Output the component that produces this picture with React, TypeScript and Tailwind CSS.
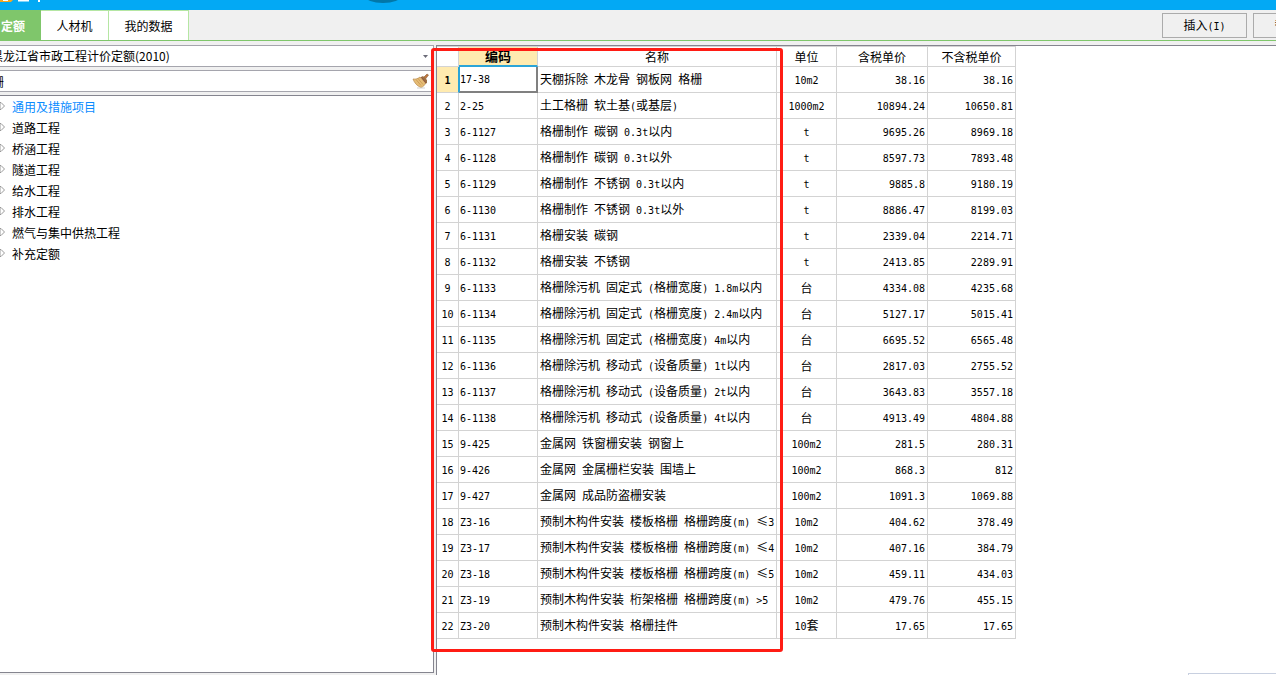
import React from "react";

type Row = [string, string, string, string, string];

const rows: Row[] = [
  ["17-38", "天棚拆除 木龙骨 钢板网 格栅", "10m2", "38.16", "38.16"],
  ["2-25", "土工格栅 软土基(或基层)", "1000m2", "10894.24", "10650.81"],
  ["6-1127", "格栅制作 碳钢 0.3t以内", "t", "9695.26", "8969.18"],
  ["6-1128", "格栅制作 碳钢 0.3t以外", "t", "8597.73", "7893.48"],
  ["6-1129", "格栅制作 不锈钢 0.3t以内", "t", "9885.8", "9180.19"],
  ["6-1130", "格栅制作 不锈钢 0.3t以外", "t", "8886.47", "8199.03"],
  ["6-1131", "格栅安装 碳钢", "t", "2339.04", "2214.71"],
  ["6-1132", "格栅安装 不锈钢", "t", "2413.85", "2289.91"],
  ["6-1133", "格栅除污机 固定式 (格栅宽度) 1.8m以内", "台", "4334.08", "4235.68"],
  ["6-1134", "格栅除污机 固定式 (格栅宽度) 2.4m以内", "台", "5127.17", "5015.41"],
  ["6-1135", "格栅除污机 固定式 (格栅宽度) 4m以内", "台", "6695.52", "6565.48"],
  ["6-1136", "格栅除污机 移动式 (设备质量) 1t以内", "台", "2817.03", "2755.52"],
  ["6-1137", "格栅除污机 移动式 (设备质量) 2t以内", "台", "3643.83", "3557.18"],
  ["6-1138", "格栅除污机 移动式 (设备质量) 4t以内", "台", "4913.49", "4804.88"],
  ["9-425", "金属网 铁窗栅安装 钢窗上", "100m2", "281.5", "280.31"],
  ["9-426", "金属网 金属栅栏安装 围墙上", "100m2", "868.3", "812"],
  ["9-427", "金属网 成品防盗栅安装", "100m2", "1091.3", "1069.88"],
  ["Z3-16", "预制木构件安装 楼板格栅 格栅跨度(m) ≤3", "10m2", "404.62", "378.49"],
  ["Z3-17", "预制木构件安装 楼板格栅 格栅跨度(m) ≤4", "10m2", "407.16", "384.79"],
  ["Z3-18", "预制木构件安装 楼板格栅 格栅跨度(m) ≤5", "10m2", "459.11", "434.03"],
  ["Z3-19", "预制木构件安装 桁架格栅 格栅跨度(m) >5", "10m2", "479.76", "455.15"],
  ["Z3-20", "预制木构件安装 格栅挂件", "10套", "17.65", "17.65"],
];

const chapters = [
  "通用及措施项目",
  "道路工程",
  "桥涵工程",
  "隧道工程",
  "给水工程",
  "排水工程",
  "燃气与集中供热工程",
  "补充定额",
];

/* Sets Latin runs in a half-width monospace beside the full-width characters. */
function Mixed({ text }: { text: string }) {
  return (
    <>
      {text.split(/([\x20-\x7e]+)/).map((part, i) =>
        i % 2 ? (
          <span key={i} className="font-['DejaVu_Sans_Mono',monospace] text-[10px]">
            {part}
          </span>
        ) : (
          part
        ),
      )}
    </>
  );
}

function TitleBar() {
  return (
    <header className="h-[10px] shrink-0 overflow-hidden bg-[#03a9f4]">
      <svg className="block" width="460" height="10" viewBox="0 0 460 10" aria-hidden="true">
        <path d="M0 0h13l-2 2H0z" fill="#f5a623" />
        <path d="M3 0h5v1H3z" fill="#fff" />
        <path d="M18 0h11v1.5H18zM38 0h2v2h-2z" fill="#fff" />
        <ellipse cx="383" cy="-4" rx="18" ry="7" fill="#0277a8" />
      </svg>
    </header>
  );
}

function Toolbar() {
  const button =
    "h-[25px] w-[85px] shrink-0 border border-[#ababab] bg-[#f0f0f0] pt-px whitespace-nowrap text-center";
  return (
    <div className="flex h-[31px] shrink-0 justify-between border-b border-[#7fc66b]">
      <nav className="flex" role="tablist">
        <button role="tab" aria-selected="true" className="w-[41px] bg-[#7fc66b] pt-px pr-4 text-right font-bold whitespace-nowrap text-white">
          定额
        </button>
        <button role="tab" aria-selected="false" className="w-[68px] border-t border-r border-[#b5e6a3] bg-white pt-px">
          人材机
        </button>
        <button role="tab" aria-selected="false" className="w-20 border-t border-r border-[#b5e6a3] bg-white pt-px">
          我的数据
        </button>
      </nav>
      <div className="-mr-[62px] flex items-center gap-[6px]">
        <button className={button}>
          <Mixed text="插入(I)" />
        </button>
        <button className={button}>
          <Mixed text="替换(R)" />
        </button>
      </div>
    </div>
  );
}

function Broom() {
  return (
    <svg width="18" height="16" viewBox="0 0 18 16" aria-hidden="true">
      <path d="M11.5 4.5L15 1l1.5 1-3 4z" fill="#c07840" stroke="#8a5a34" strokeWidth=".6" />
      <path d="M9 4l2-1 4 4v3l-2 1z" fill="#9a7044" />
      <path d="M1 6c3 .5 5-.5 7-2l5.5 6c-.5 2-2.500 4-4.500 4.500C5 13 2.500 10 1 6z" fill="#e6bd76" stroke="#b88a4c" strokeWidth=".7" />
      <path d="M4 6.500l5 6M6 5.500l5 6" stroke="#c4924e" strokeWidth=".7" fill="none" />
      <path d="M9 4l5 6" stroke="#8c4a3a" strokeWidth=".8" />
      <path d="M5 15h8" stroke="#c8c8c8" strokeWidth=".8" />
    </svg>
  );
}

function Sidebar() {
  return (
    <aside className="-ml-3 flex w-[446px] shrink-0 flex-col">
      <div className="relative flex h-[22px] shrink-0 items-center border border-[#a5a5ad] bg-white">
        <select aria-label="定额库" className="h-full w-full appearance-none bg-white pl-[2px] outline-none">
          <option>黑龙江省市政工程计价定额(2010)</option>
        </select>
        <svg className="pointer-events-none absolute right-[5px]" width="5" height="3" viewBox="0 0 5 3" aria-hidden="true">
          <path d="M0 0h5L2.5 3z" fill="#6b6b78" />
        </svg>
      </div>
      <div className="mt-[3px] flex h-[22px] shrink-0 items-center border border-[#a5a5ad] bg-white pr-[3px]">
        <input aria-label="搜索定额" defaultValue="栅" className="h-full min-w-0 flex-1 pl-[3px] outline-none" />
        <button aria-label="清除">
          <Broom />
        </button>
      </div>
      <ul role="tree" className="mt-[3px] grow border border-[#85858f] bg-white">
        {chapters.map((name, i) => (
          <li
            key={name}
            role="treeitem"
            aria-selected={i === 0}
            className={
              i === 0
                ? "flex h-[21px] items-center gap-[7px] pl-[10px] text-[#0a8cff]"
                : "flex h-[21px] items-center gap-[7px] pl-[10px]"
            }
          >
            <svg width="6" height="8" viewBox="0 0 6 8" className="mb-px" aria-hidden="true">
              <path d="M1 .5h1L5.500 4 2 7.500H1z" fill="#fff" stroke="#999" />
            </svg>
            {name}
          </li>
        ))}
      </ul>
    </aside>
  );
}

function QuotaTable() {
  const cell = "border-r border-b border-[#d3d3d3] p-0 whitespace-nowrap overflow-hidden";
  return (
    <table className="w-[579px] table-fixed border-separate border-spacing-0">
      <colgroup>
        <col className="w-[22px]" />
        <col className="w-[79px]" />
        <col className="w-[239px]" />
        <col className="w-[60px]" />
        <col className="w-[91px]" />
        <col className="w-[88px]" />
      </colgroup>
      <thead>
        <tr className="h-[21px]">
          <th className={`${cell} border-t`} aria-label="序号" />
          <th className="border-t border-r border-b-2 border-t-[#d3d3d3] border-r-[#d3d3d3] border-b-[#2ba5d8] bg-[#ffebb0] p-0 text-[13px] font-bold">
            编码
          </th>
          {["名称", "单位", "含税单价", "不含税单价"].map((h) => (
            <th key={h} className={`${cell} border-t font-normal`}>
              {h}
            </th>
          ))}
        </tr>
      </thead>
      <tbody>
        {rows.map(([code, name, unit, taxed, untaxed], i) => (
          <tr key={code} className="h-[26px]">
            <th
              scope="row"
              className={
                i === 0
                  ? "border-r border-b border-r-[#2ba5d8] border-b-[#d3d3d3] bg-[#ffebb0] p-0 font-bold"
                  : `${cell} font-normal`
              }
            >
              <Mixed text={String(i + 1)} />
            </th>
            <td
              className={
                i === 0
                  ? "border-r-2 border-b-2 border-l border-r-[#808080] border-b-[#808080] border-l-[#2ba5d8] p-0"
                  : `${cell} pl-px`
              }
            >
              <Mixed text={code} />
            </td>
            <td className={`${cell} pl-[2px]`}>
              <Mixed text={name} />
            </td>
            <td className={`${cell} text-center`}>
              <Mixed text={unit} />
            </td>
            <td className={`${cell} pr-[2px] text-right`}>
              <Mixed text={taxed} />
            </td>
            <td className={`${cell} pr-[2px] text-right`}>
              <Mixed text={untaxed} />
            </td>
          </tr>
        ))}
      </tbody>
    </table>
  );
}

export default function App() {
  return (
    <div className="flex h-screen flex-col overflow-hidden bg-[#f0f0f0] font-['Noto_Sans_CJK_SC',sans-serif] text-xs leading-4 text-black">
      <TitleBar />
      <Toolbar />
      <div className="flex min-h-0 grow gap-[2px] pt-1">
        <div className="flex pb-[2px]">
          <Sidebar />
        </div>
        <main className="relative flex min-w-0 grow flex-col justify-between border-t border-l border-[#85858f] bg-white">
          <QuotaTable />
          <div className="pointer-events-none absolute top-[2px] -left-[6px] h-[604px] w-[352px] rounded-[3px] border-3 border-[#ff1c14]" />
          <div className="h-[2px] w-[88px] self-end border-t border-l border-[#c8d0e0]" />
        </main>
      </div>
    </div>
  );
}
